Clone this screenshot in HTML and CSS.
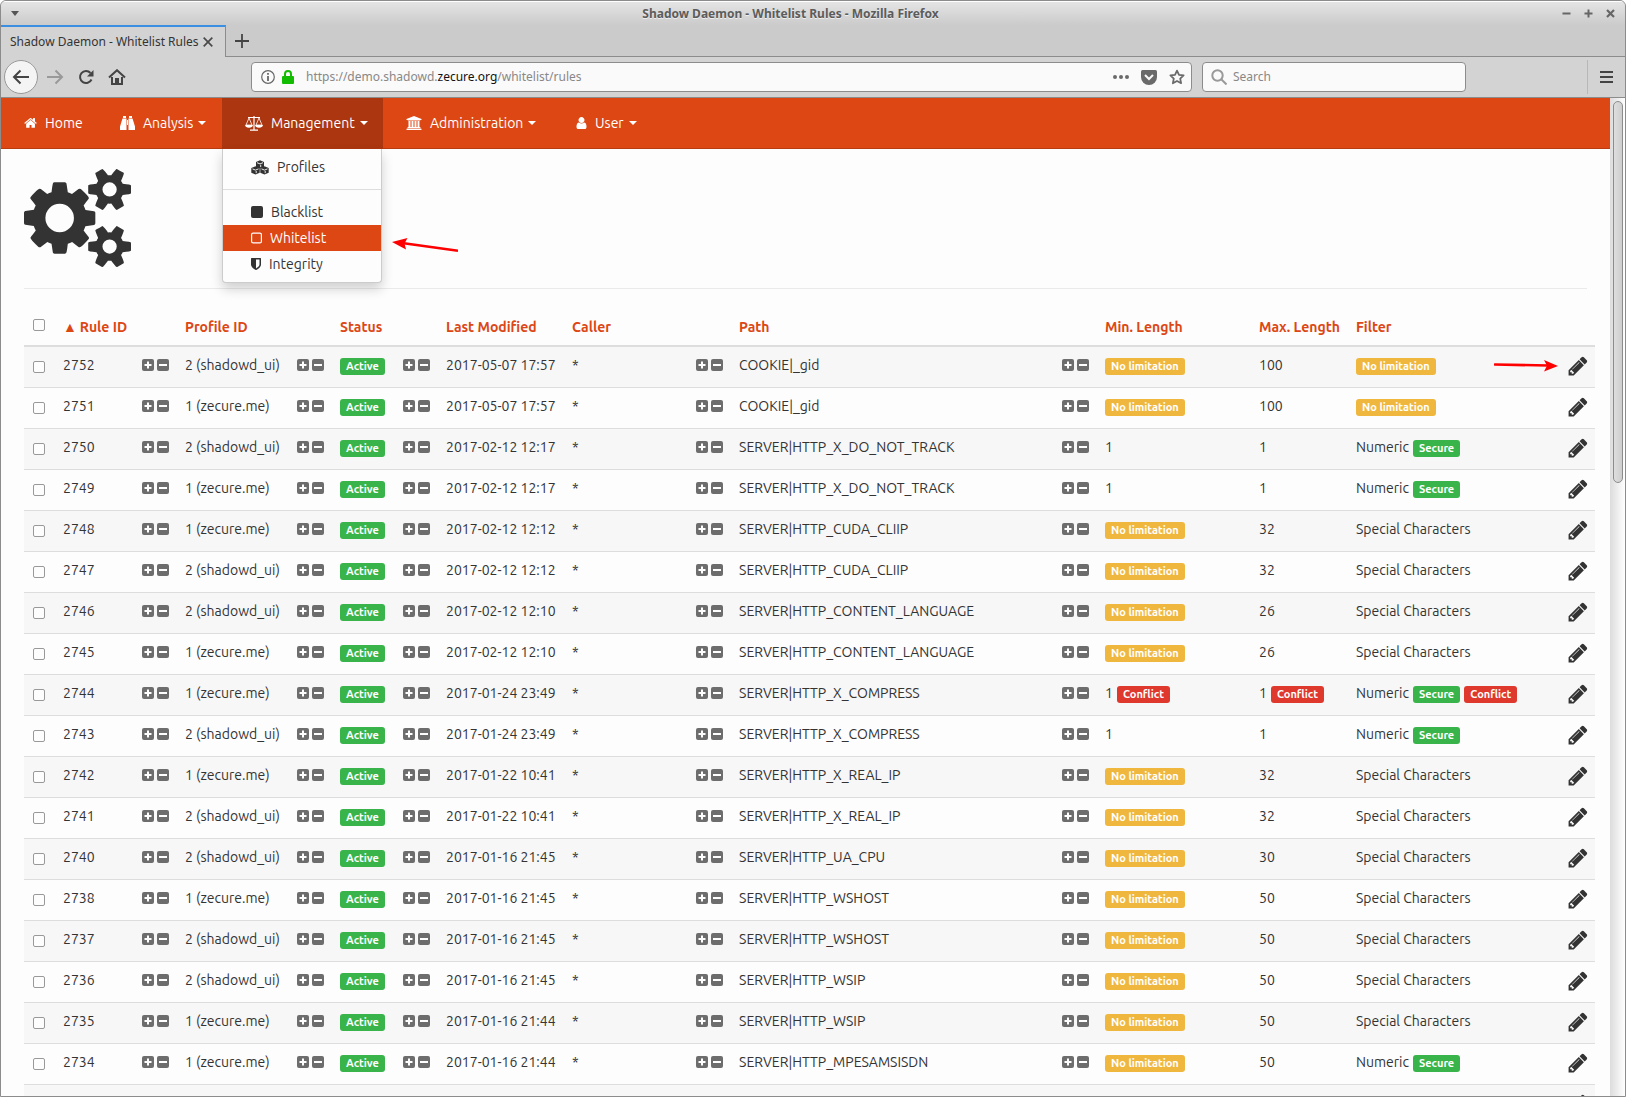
FILE: index.html
```html
<!DOCTYPE html>
<html lang="en">
<head>
<meta charset="utf-8">
<title>Shadow Daemon - Whitelist Rules</title>
<link rel="stylesheet" href="styles.css">
</head>
<body>
<svg class="sprite" aria-hidden="true">
  <symbol id="plus" viewBox="0 0 12 12"><rect width="12" height="12" rx="2" fill="#6d6d6d"/><path d="M6 2.500v7M2.500 6h7" stroke="#fff" stroke-width="2"/></symbol>
  <symbol id="minus" viewBox="0 0 12 12"><rect width="12" height="12" rx="2" fill="#6d6d6d"/><path d="M2 6h8" stroke="#fff" stroke-width="2"/></symbol>
  <symbol id="pencil" viewBox="0 0 1792 1792"><path d="M491 1536l91-91-235-235-91 91v107h128v128h107zm523-928q0-22-22-22-10 0-17 7l-542 542q-7 7-7 17 0 22 22 22 10 0 17-7l542-542q7-7 7-17zm-54-192l416 416-832 832h-416v-416zm683 96q0 53-37 90l-166 166-416-416 166-165q36-38 90-38 53 0 91 38l235 234q37 39 37 91z"/></symbol>
</svg>
<div class="window">
  <header class="titlebar">
    <button class="win-btn" aria-label="Window menu"><svg width="8" height="5" viewBox="0 0 8 5"><path d="M0 0h8L4 5z" fill="#555"/></svg></button>
    <h1 class="win-title">Shadow Daemon - Whitelist Rules - Mozilla Firefox</h1>
    <div class="win-controls">
      <button class="win-btn" aria-label="Minimize"><svg width="9" height="9" viewBox="0 0 9 9"><path d="M.5 4.500h8" stroke="#666" stroke-width="2"/></svg></button>
      <button class="win-btn" aria-label="Maximize"><svg width="9" height="9" viewBox="0 0 9 9"><path d="M.5 4.500h8M4.500.5v8" stroke="#666" stroke-width="2"/></svg></button>
      <button class="win-btn" aria-label="Close"><svg width="9" height="9" viewBox="0 0 9 9"><path d="M1 1l7 7M8 1l-7 7" stroke="#666" stroke-width="2.200"/></svg></button>
    </div>
  </header>
  <div class="tabs">
    <div class="tab"><span>Shadow Daemon - Whitelist Rules</span><button class="tab-close" aria-label="Close tab"><svg width="10" height="10" viewBox="0 0 10 10"><path d="M.7.700l8.600 8.600M9.300.7L.7 9.300" stroke="#4a4a4a" stroke-width="1.700"/></svg></button></div>
    <button class="tab-new" aria-label="New tab"><svg width="14" height="14" viewBox="0 0 14 14"><path d="M7 0v14M0 7h14" stroke="#444" stroke-width="1.800"/></svg></button>
  </div>
  <div class="toolbar">
    <div class="tools">
      <button class="back" aria-label="Back"><svg width="18" height="16" viewBox="0 0 18 16"><path d="M8.500 1.500L2 8l6.500 6.500M2 8h15" fill="none" stroke="#444" stroke-width="2"/></svg></button>
      <button class="tool" aria-label="Forward"><svg width="18" height="16" viewBox="0 0 18 16"><path d="M9.500 1.500L16 8l-6.500 6.500M16 8H1" fill="none" stroke="#999" stroke-width="2"/></svg></button>
      <button class="tool" aria-label="Reload"><svg width="16" height="16" viewBox="0 0 16 16"><path d="M13.500 10.500A6 6 0 1 1 12.500 4" fill="none" stroke="#444" stroke-width="2"/><path d="M15.500 1v6.500H9z" fill="#444"/></svg></button>
      <button class="tool" aria-label="Home page"><svg width="18" height="16" viewBox="0 0 18 16"><path d="M1 8.500L9 1.200l8 7.300" fill="none" stroke="#444" stroke-width="2"/><path d="M4 8v7h10V8" fill="none" stroke="#444" stroke-width="2"/><path d="M7 9h4v6H7z" fill="#444"/></svg></button>
    </div>
    <div class="url">
      <svg width="14" height="14" viewBox="0 0 14 14"><circle cx="7" cy="7" r="6.300" fill="none" stroke="#666" stroke-width="1.200"/><path d="M7 6v5M7 3v1.800" stroke="#666" stroke-width="1.800"/></svg>
      <svg width="12" height="14" viewBox="0 0 12 14"><rect y="6" width="12" height="8" rx="1" fill="#12bc00"/><path d="M3 7V4a3 3 0 0 1 6 0v3" fill="none" stroke="#12bc00" stroke-width="2"/></svg>
      <div class="address" role="textbox" aria-label="Address" contenteditable="true" spellcheck="false">https://demo.shadowd.<b>zecure.org</b>/whitelist/rules</div>
      <svg width="16" height="4" viewBox="0 0 16 4"><circle cx="2" cy="2" r="2"/><circle cx="8" cy="2" r="2"/><circle cx="14" cy="2" r="2"/></svg>
      <svg width="16" height="15" viewBox="0 0 16 15"><path d="M1.500 0h13Q16 0 16 1.500V7A8 8 0 0 1 0 7V1.500Q0 0 1.500 0z"/><path d="M4 5l4 4 4-4" fill="none" stroke="#fafafa" stroke-width="2"/></svg>
      <svg width="16" height="16" viewBox="0 0 16 16"><path d="M8 1.600l2 4.200 4.600.6-3.400 3.200.9 4.600L8 12l-4.100 2.200.9-4.600L1.400 6.400 6 5.800z" fill="none" stroke="#6a6a6a" stroke-width="1.800" stroke-linejoin="round"/></svg>
    </div>
    <label class="search">
      <svg width="16" height="16" viewBox="0 0 16 16"><circle cx="6.500" cy="6.500" r="5.200" fill="none" stroke="#999" stroke-width="2"/><path d="M10.500 10.500l5 5" stroke="#999" stroke-width="2"/></svg>
      <input type="text" placeholder="Search" aria-label="Search">
    </label>
    <button class="burger" aria-label="Open menu"><svg width="13" height="12" viewBox="0 0 13 12"><path d="M0 1h13M0 6h13M0 11h13" stroke="#444" stroke-width="2"/></svg></button>
  </div>
  <div class="viewport">
    <div class="page">
      <nav class="navbar">
        <a class="nav-item home" href="#"><svg width="13" height="12" viewBox="40 200 1700 1400"><path d="M1472 992v480q0 26-19 45t-45 19h-384v-384h-256v384h-384q-26 0-45-19t-19-45v-480q0-1 .5-3t.5-3l575-474 575 474q1 2 1 6zm223-69l-62 74q-8 9-21 11h-3q-13 0-21-7l-692-577-692 577q-12 8-24 7-13-2-21-11l-62-74q-8-10-7-23.500t11-21.500l719-599q32-26 76-26t76 26l244 204v-195q0-14 9-23t23-9h192q14 0 23 9t9 23v408l219 182q10 8 11 21.500t-7 23.500z"/></svg>Home</a>
        <a class="nav-item analysis" href="#"><svg width="15" height="15" viewBox="0 0 15 15"><path d="M3 0h3v2H3zM9 0h3v2H9zM2.500 2.500h4V14H0v-3.500zM8.500 2.500h4L15 10.500V14H8.500zM7 4h1v5H7z"/></svg>Analysis<i class="caret"></i></a>
        <div class="nav-group">
          <a class="nav-item open" href="#" aria-expanded="true"><svg width="18" height="15" viewBox="0 0 18 15"><path d="M9 0v14M3 1.500h12M5 14.200h8" stroke="#fff" fill="none" stroke-width="1.200"/><path d="M4 2L1 9h6zM14 2l-3 7h6z" fill="none" stroke="#fff" stroke-width=".8"/><path d="M0 9h8q-.5 2.800-4 2.800T0 9zM10 9h8q-.5 2.800-4 2.800T10 9z"/></svg>Management<i class="caret"></i></a>
          <div class="menu">
            <a href="#"><svg width="18" height="15" viewBox="0 0 18 15"><path d="M9 .3l4 1.700v4.600L9 8.300 5 6.600V2zM4.500 6.300l4.200 1.800v4.600l-4.200 1.800L.3 12.700V8.100zM13.500 6.300l4.200 1.800v4.600l-4.200 1.800-4.200-1.800V8.100z"/><path d="M6 2.700l3 1.200 3-1.200M1.500 8.900l3 1.200 3-1.200M10.500 8.900l3 1.200 3-1.200M9.700 4.800v2.300M5.200 11v2.200M14.200 11v2.200" stroke="#fff" stroke-width=".9" fill="none"/></svg>Profiles</a>
            <hr>
            <a href="#"><svg width="12" height="12" viewBox="0 0 12 12"><rect width="12" height="12" rx="2"/></svg>Blacklist</a>
            <a class="current" href="#"><svg width="11" height="12" viewBox="0 0 11 12"><rect x=".6" y="1.100" width="9.800" height="9.800" rx="1.500" fill="none" stroke="#fff" stroke-width="1.200"/></svg>Whitelist</a>
            <a href="#"><svg width="10" height="12" viewBox="256 128 1280 1536"><path d="M1344 960v-640h-448v1137q119-63 213-137 235-184 235-360zm192-768v768q0 86-33.500 170.500t-83 150-118 127.500-126.500 103-121 77.500-89.500 49.500-42.500 20q-12 6-26 6t-26-6q-16-7-42.500-20t-89.500-49.500-121-77.500-126.500-103-118-127.500-83-150-33.500-170.500v-768q0-26 19-45t45-19h1152q26 0 45 19t19 45z"/></svg>Integrity</a>
          </div>
        </div>
        <a class="nav-item admin" href="#"><svg width="16" height="14" viewBox="0 0 1920 1792"><path d="M960 0l960 384v128h-128q0 26-20.500 45t-48.500 19h-1526q-28 0-48.500-19t-20.500-45h-128v-128zm-704 640h256v768h128v-768h256v768h128v-768h256v768h128v-768h256v768h59q28 0 48.500 19t20.500 45v64h-1664v-64q0-26 20.500-45t48.500-19h59v-768zm1595 960q28 0 48.500 19t20.500 45v128h-1920v-128q0-26 20.500-45t48.500-19h1782z"/></svg>Administration<i class="caret"></i></a>
        <a class="nav-item" href="#"><svg width="11" height="12" viewBox="256 128 1280 1536"><path d="M1536 1399q0 109-62.500 187t-150.500 78h-854q-88 0-150.500-78t-62.500-187q0-85 8.500-160.500t31.500-152 58.500-131 94-89 134.500-34.500q131 128 313 128t313-128q76 0 134.500 34.500t94 89 58.500 131 31.500 152 8.500 160.500zm-256-887q0 159-112.500 271.500t-271.500 112.500-271.500-112.500-112.500-271.500 112.500-271.500 271.500-112.500 271.500 112.500 112.500 271.500z"/></svg>User<i class="caret"></i></a>
      </nav>
      <main class="content">
        <svg class="cogs" width="107" height="100" viewBox="0 0 1920 1792"><path d="M896 896q0-106-75-181t-181-75-181 75-75 181 75 181 181 75 181-75 75-181zm768 512q0-52-38-90t-90-38-90 38-38 90q0 53 37.500 90.500t90.500 37.500 90.500-37.500 37.500-90.500zm0-1024q0-52-38-90t-90-38-90 38-38 90q0 53 37.500 90.500t90.500 37.500 90.500-37.500 37.500-90.500zm-384 421v185q0 10-7 19.500t-16 10.500l-155 24q-11 35-32 76 34 48 90 115 7 11 7 20 0 12-7 19-23 30-82.500 89.500t-78.500 59.500q-11 0-21-7l-115-90q-37 19-77 31-11 108-23 155-7 24-30 24h-186q-11 0-20-7.500t-10-17.500l-23-153q-34-10-75-31l-118 89q-7 7-20 7-11 0-21-8-144-133-144-160 0-9 7-19 10-14 41-53t47-61q-23-44-35-82l-152-24q-10-1-17-9.500t-7-19.500v-185q0-10 7-19.500t16-10.500l155-24q11-35 32-76-34-48-90-115-7-11-7-20 0-12 7-20 22-30 82-89t79-59q11 0 21 7l115 90q34-18 77-32 11-108 23-154 7-24 30-24h186q11 0 20 7.500t10 17.500l23 153q34 10 75 31l118-89q8-7 20-7 11 0 21 8 144 133 144 160 0 8-7 19-12 16-42 54t-45 60q23 48 34 82l152 23q10 2 17 10.500t7 19.500zm640 533v140q0 16-149 31-12 27-30 52 51 113 51 138 0 4-4 7-122 71-124 71-8 0-46-47t-52-68q-20 2-30 2t-30-2q-14 21-52 68t-46 47q-2 0-124-71-4-3-4-7 0-25 51-138-18-25-30-52-149-15-149-31v-140q0-16 149-31 13-29 30-52-51-113-51-138 0-4 4-7 4-2 35-20t59-34 30-16q8 0 46 46.500t52 67.500q20-2 30-2t30 2q51-71 92-112l6-2q4 0 124 70 4 3 4 7 0 25-51 138 17 23 30 52 149 15 149 31zm0-1024v140q0 16-149 31-12 27-30 52 51 113 51 138 0 4-4 7-122 71-124 71-8 0-46-47t-52-68q-20 2-30 2t-30-2q-14 21-52 68t-46 47q-2 0-124-71-4-3-4-7 0-25 51-138-18-25-30-52-149-15-149-31v-140q0-16 149-31 13-29 30-52-51-113-51-138 0-4 4-7 4-2 35-20t59-34 30-16q8 0 46 46.500t52 67.500q20-2 30-2t30 2q51-71 92-112l6-2q4 0 124 70 4 3 4 7 0 25-51 138 17 23 30 52 149 15 149 31z"/></svg>
        <hr class="rule">
        <table class="rules">
          <colgroup><col class="c-check"><col class="c-id"><col class="c-pm"><col class="c-profile"><col class="c-pm"><col class="c-status"><col class="c-pm"><col class="c-date"><col class="c-caller"><col class="c-pm"><col><col class="c-pm"><col class="c-min"><col class="c-max"><col class="c-filter"><col class="c-edit"></colgroup>
          <thead>
            <tr>
              <th><input type="checkbox" aria-label="Select all rules"></th>
              <th colspan="2"><a class="sorted" href="#"><span class="sort">▲</span>Rule ID</a></th>
              <th colspan="2"><a href="#">Profile ID</a></th>
              <th colspan="2"><a href="#">Status</a></th>
              <th><a href="#">Last Modified</a></th>
              <th colspan="2"><a href="#">Caller</a></th>
              <th colspan="2"><a href="#">Path</a></th>
              <th><a href="#">Min. Length</a></th>
              <th><a href="#">Max. Length</a></th>
              <th colspan="2"><a href="#">Filter</a></th>
            </tr>
          </thead>
          <tbody id="rules"></tbody>
        </table>
      </main>
      <svg class="arrow arrow-menu" width="66" height="14" viewBox="0 0 66 14"><path d="M10 5L66 12.700" stroke="red" stroke-width="2.600"/><path d="M0 4L15.500 0l-3 5.500 1.500 6z" fill="red"/></svg>
      <svg class="arrow arrow-edit" width="64" height="12" viewBox="0 0 64 12"><path d="M1 4.500L54 5.500" stroke="red" stroke-width="2.600" stroke-linecap="round"/><path d="M64 6L50 0l3 5.700L50 11.500z" fill="red"/></svg>
    </div>
    <div class="scrollbar"><div class="thumb"></div></div>
  </div>
</div>
<script src="rules.js"></script>
</body>
</html>
```

FILE: styles.css
```css
* { box-sizing: border-box; }
body {
  margin: 0;
  font: 14px/20px "Ubuntu", "Noto Sans", "Open Sans", sans-serif;
  color: #333;
  background: #fff;
}
button { border: 0; padding: 0; background: none; display: flex; align-items: center; justify-content: center; }
a { color: inherit; text-decoration: none; }
svg { flex: none; display: block; }
.sprite { position: absolute; width: 0; height: 0; }

.window {
  height: 100vh;
  display: flex;
  flex-direction: column;
  overflow: hidden;
  border: 1px solid #8c8c8c;
  border-radius: 6px 6px 0 0;
  background: #cbcbcb;
}

/* Title bar */
.titlebar, .tabs, .toolbar { font-family: "Noto Sans", "Open Sans", sans-serif; }
.titlebar {
  flex: none;
  height: 24px;
  display: flex;
  align-items: center;
  padding: 0 10px 0 10px;
  background: linear-gradient(#e4e4e4, #cbcbcb);
  border-top: 1px solid #fff;
}
.win-title {
  flex: 1;
  margin: 0;
  text-align: center;
  font-size: 12px;
  line-height: 20px;
  color: #5c5c5c;
  text-shadow: 0 1px #eee;
}
.win-controls { display: flex; gap: 13px; }

/* Tabs */
.tabs { flex: none; height: 32px; display: flex; }
.tabs::after { content: ""; flex: 1; border-bottom: 1px solid #8c8c8c; }
.tab {
  display: flex;
  align-items: center;
  justify-content: space-between;
  width: 225px;
  padding: 0 12px 0 9px;
  border-top: 2px solid #3b8ee0;
  border-right: 1px solid #8c8c8c;
  background: #d3d3d3;
  font-size: 12px;
  color: #333;
  white-space: nowrap;
}
.tab-new { width: 32px; border-bottom: 1px solid #8c8c8c; }

/* Navigation toolbar */
.toolbar {
  flex: none;
  height: 41px;
  display: flex;
  align-items: center;
  padding-right: 12px;
  border-bottom: 1px solid #8c8c8c;
  background: #d3d3d3;
}
.tools { display: flex; align-items: center; gap: 14px; width: 250px; padding-left: 3px; }
.back {
  width: 34px;
  height: 34px;
  margin-right: -6px;
  border: 1px solid #999;
  border-radius: 50%;
  background: #f4f4f4;
}
.url, .search {
  display: flex;
  align-items: center;
  height: 30px;
  border: 1px solid #8c8c8c;
  border-radius: 4px;
  background: #fafafa;
  font-size: 12px;
}
.url { flex: 1; gap: 12px; padding: 0 6px 0 9px; fill: #6a6a6a; }
.url svg + svg { margin-left: -5px; }
.url .address ~ svg { margin-left: 0; }
.address { flex: 1; color: #888; white-space: nowrap; overflow: hidden; outline: 0; }
.address b { font-weight: 400; color: #111; }
.search { width: 264px; margin: 0 121px 0 10px; padding: 0 8px; gap: 6px; }
.search input { flex: 1; min-width: 0; border: 0; padding: 0; background: none; font: inherit; outline: 0; }
.search input::placeholder { color: #888; }
.burger { height: 34px; padding-left: 12px; border-left: 1px solid #b8b8b8; }

/* Browser viewport */
.viewport { flex: 1; min-height: 0; display: flex; overflow: hidden; }
.page { position: relative; flex: 1; min-width: 0; background: #fdfdfd; overflow: hidden; }
.scrollbar { width: 15px; padding: 3px; background: linear-gradient(90deg, #dcdcdc, #fff); }
.thumb { width: 10px; height: 382px; border: 1px solid #8c8c8c; border-radius: 5px; background: linear-gradient(90deg, #dedede, #cecece); }

/* Navbar */
.navbar { display: flex; height: 51px; background: #dc4714; border-bottom: 1px solid #b93b10; color: #fff; fill: #fff; }
.nav-item { display: flex; align-items: center; gap: 8px; height: 50px; padding: 0 15px 0 23px; white-space: nowrap; }
.nav-item.home { width: 96px; }
.nav-item.analysis { width: 125px; }
.nav-item.admin { width: 170px; }
.nav-item.open { width: 161px; background: #ab360f; box-shadow: 0 1px #ab360f; }
.caret { border: 4px solid transparent; border-top-color: #fff; border-bottom: 0; margin-left: -3px; }
.nav-group { position: relative; }
.menu {
  position: absolute;
  z-index: 2;
  top: 51px;
  left: 0;
  width: 160px;
  padding: 5px 0;
  border: 1px solid #ccc;
  border-top: 0;
  border-radius: 0 0 4px 4px;
  background: #fdfdfd;
  box-shadow: 0 6px 12px rgba(0, 0, 0, .18);
  color: #333;
  fill: #333;
}
.menu a { display: flex; align-items: center; gap: 8px; padding: 3px 28px; }
.menu .current { background: #dc4714; color: #fff; }
.menu hr { margin: 9px 0; border: 0; border-top: 1px solid #ddd; }

/* Page content */
.content { padding: 19px 23px 0; }
.cogs { fill: #333; }
.rule { margin: 20px 0; border: 0; border-top: 1px solid #eaeaea; }

.rules { width: calc(100% + 8px); table-layout: fixed; border-spacing: 0; }
.rules th, .rules td { padding: 8px 0 0 8px; text-align: left; vertical-align: top; white-space: nowrap; }
.rules th { height: 38px; border-bottom: 2px solid #ddd; color: #dc4714; }
.rules td { height: 41px; border-bottom: 1px solid #ddd; }
.rules tbody tr:nth-child(odd) { background: #f7f7f7; }
.rules input {
  appearance: none;
  display: block;
  width: 12px;
  height: 12px;
  margin: 2px 1px 0;
  border: 1px solid #999;
  border-radius: 2px;
  background: #fdfdfd;
}
.rules td input { margin-top: 6px; }
.c-check { width: 31px; }
.c-id { width: 79px; }
.c-pm { width: 43px; }
.c-profile { width: 112px; }
.c-status { width: 63px; }
.c-date { width: 126px; }
.c-caller { width: 124px; }
.c-min { width: 154px; }
.c-max { width: 97px; }
.c-filter { width: 211px; }
.c-edit { width: 36px; }
.sorted { display: flex; gap: 3px; height: 20px; }
.sort { font-weight: 400; }
.pm { display: flex; gap: 3px; padding-top: 4px; }
.edit svg { fill: #333; }
.cell { display: flex; gap: 4px; }
.badge {
  height: 17px;
  margin-top: 3px;
  padding: 0 6px;
  border-radius: 3px;
  color: #fff;
  font-size: 11px;
  font-weight: 700;
  line-height: 17px;
}
.green { background: #38b44a; }
.amber { background: #efb73e; }
.red { background: #df382c; }

/* Annotation arrows */
.arrow { position: absolute; z-index: 3; }
.arrow-menu { left: 391px; top: 140px; }
.arrow-edit { right: 52px; top: 262px; }
```

FILE: rules.js
```js
// id, profile, last modified, path, min. length, max. length, filter
const rules = [
  [2752, 2, "2017-05-07 17:57", "COOKIE|_gid", "~", "100", "~"],
  [2751, 1, "2017-05-07 17:57", "COOKIE|_gid", "~", "100", "~"],
  [2750, 2, "2017-02-12 12:17", "SERVER|HTTP_X_DO_NOT_TRACK", "1", "1", "Numeric"],
  [2749, 1, "2017-02-12 12:17", "SERVER|HTTP_X_DO_NOT_TRACK", "1", "1", "Numeric"],
  [2748, 1, "2017-02-12 12:12", "SERVER|HTTP_CUDA_CLIIP", "~", "32", "Special Characters"],
  [2747, 2, "2017-02-12 12:12", "SERVER|HTTP_CUDA_CLIIP", "~", "32", "Special Characters"],
  [2746, 2, "2017-02-12 12:10", "SERVER|HTTP_CONTENT_LANGUAGE", "~", "26", "Special Characters"],
  [2745, 1, "2017-02-12 12:10", "SERVER|HTTP_CONTENT_LANGUAGE", "~", "26", "Special Characters"],
  [2744, 1, "2017-01-24 23:49", "SERVER|HTTP_X_COMPRESS", "1", "1", "Numeric", true],
  [2743, 2, "2017-01-24 23:49", "SERVER|HTTP_X_COMPRESS", "1", "1", "Numeric"],
  [2742, 1, "2017-01-22 10:41", "SERVER|HTTP_X_REAL_IP", "~", "32", "Special Characters"],
  [2741, 2, "2017-01-22 10:41", "SERVER|HTTP_X_REAL_IP", "~", "32", "Special Characters"],
  [2740, 2, "2017-01-16 21:45", "SERVER|HTTP_UA_CPU", "~", "30", "Special Characters"],
  [2738, 1, "2017-01-16 21:45", "SERVER|HTTP_WSHOST", "~", "50", "Special Characters"],
  [2737, 2, "2017-01-16 21:45", "SERVER|HTTP_WSHOST", "~", "50", "Special Characters"],
  [2736, 2, "2017-01-16 21:45", "SERVER|HTTP_WSIP", "~", "50", "Special Characters"],
  [2735, 1, "2017-01-16 21:44", "SERVER|HTTP_WSIP", "~", "50", "Special Characters"],
  [2734, 1, "2017-01-16 21:44", "SERVER|HTTP_MPESAMSISDN", "~", "50", "Numeric"],
];
const profiles = { 1: "1 (zecure.me)", 2: "2 (shadowd_ui)" };

const badge = (color, text) => `<span class="badge ${color}">${text}</span>`;
const icon = (name, size) => `<svg width="${size}" height="${size}"><use href="#${name}"/></svg>`;
const plusMinus = `<td><div class="pm"><button aria-label="Include">${icon("plus", 12)}</button><button aria-label="Exclude">${icon("minus", 12)}</button></div></td>`;

function value(text, conflict) {
  let html = text === "~" ? badge("amber", "No limitation") : `<span>${text}</span>`;
  if (text === "Numeric") html += badge("green", "Secure");
  if (conflict) html += badge("red", "Conflict");
  return `<td><div class="cell">${html}</div></td>`;
}

const rows = rules.map(([id, profile, date, path, min, max, filter, conflict]) => `<tr>
  <td><input type="checkbox" aria-label="Select rule ${id}"></td>
  <td>${id}</td>${plusMinus}
  <td>${profiles[profile]}</td>${plusMinus}
  <td><div class="cell">${badge("green", "Active")}</div></td>${plusMinus}
  <td>${date}</td>
  <td>*</td>${plusMinus}
  <td>${path}</td>${plusMinus}
  ${value(min, conflict)}${value(max, conflict)}${value(filter, conflict)}
  <td><button class="edit" aria-label="Edit rule ${id}">${icon("pencil", 22)}</button></td>
</tr>`);

// Placeholder for the next rule, below the fold.
rows.push(`<tr><td colspan="15"></td><td><button class="edit" aria-label="Edit next rule">${icon("pencil", 22)}</button></td></tr>`);
document.getElementById("rules").innerHTML = rows.join("");
```
